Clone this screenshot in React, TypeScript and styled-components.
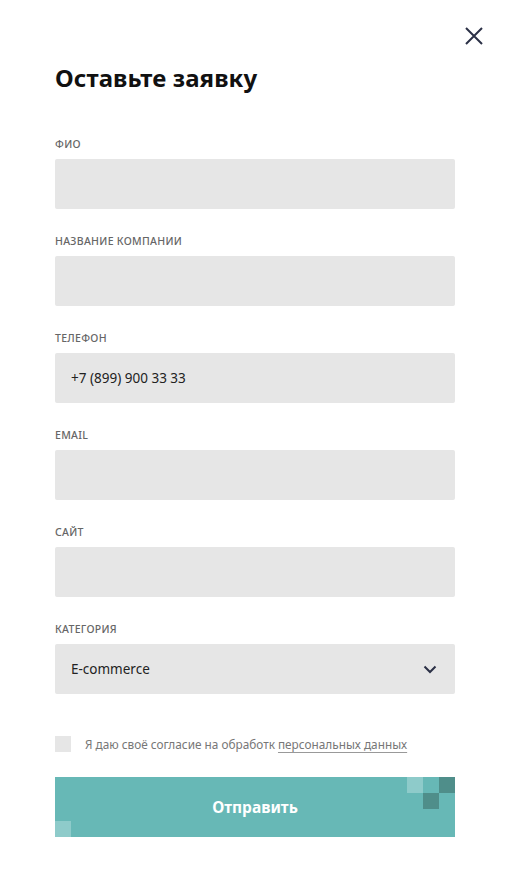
import React from "react";
import styled, { createGlobalStyle } from "styled-components";

const Global = createGlobalStyle`
  html, body { margin: 0; padding: 0; background: #fff; }
  body { font-family: "Noto Sans", "Liberation Sans", sans-serif; }
`;

const Modal = styled.div`
  position: relative;
  width: 510px;
  min-height: 893px;
  box-sizing: border-box;
  padding: 58px 55px 0 55px;
  background: #fff;
`;

const Close = styled.button`
  position: absolute;
  top: 26px;
  right: 26px;
  width: 20px;
  height: 20px;
  padding: 0;
  border: 0;
  background: none;
  display: flex;
  align-items: center;
  justify-content: center;
`;

const Title = styled.h1`
  margin: 0 0 38px 0;
  font-size: 24px;
  line-height: 40px;
  font-weight: 700;
  color: #111;
  letter-spacing: 0.1px;
`;

const Form = styled.form`
  display: flex;
  flex-direction: column;
  gap: 24px;
`;

const Field = styled.div`
  display: flex;
  flex-direction: column;
  gap: 7px;
`;

const Label = styled.label`
  font-size: 10.5px;
  line-height: 16px;
  font-weight: 500;
  color: #666;
  text-transform: uppercase;
  letter-spacing: 0.3px;
`;

const InputBox = styled.div`
  height: 50px;
  background: #e6e6e6;
  border-radius: 2px;
  display: flex;
  align-items: center;
  padding: 0 18px 0 16px;
  box-sizing: border-box;
  justify-content: space-between;
  font-size: 13.5px;
  color: #222;
`;

const Consent = styled.div`
  display: flex;
  align-items: center;
  gap: 14px;
  margin-top: 42px;
  height: 16px;
  font-size: 11.8px;
  color: #777;
`;

const Box = styled.span`
  width: 16px;
  height: 16px;
  background: #e6e6e6;
  flex: none;
`;

const Link = styled.span`
  text-decoration: underline;
  text-decoration-color: #999;
  text-underline-offset: 3px;
`;

const Submit = styled.button`
  position: relative;
  display: block;
  width: 100%;
  margin-top: 25px;
  height: 60px;
  border: 0;
  background: #67b8b6;
  color: #fff;
  font-family: inherit;
  font-size: 15.5px;
  font-weight: 700;
  overflow: hidden;
`;

const Pixel = styled.span<{ $x: number; $y: number; $c: string }>`
  position: absolute;
  width: 16px;
  height: 16px;
  left: ${(p) => p.$x}px;
  top: ${(p) => p.$y}px;
  background: ${(p) => p.$c};
`;

const LIGHT = "#8ecbca";
const DARK = "#4f8e8a";

const fields = [
  { label: "ФИО" },
  { label: "Название компании" },
  { label: "Телефон", value: "+7 (899) 900 33 33" },
  { label: "Email" },
  { label: "Сайт" },
];

export default function App() {
  return (
    <>
      <Global />
      <Modal>
        <Close aria-label="Закрыть">
          <svg width="18" height="18" viewBox="0 0 18 18">
            <path d="M1 1L17 17M17 1L1 17" stroke="#2b3046" strokeWidth="2" />
          </svg>
        </Close>
        <Title>Оставьте заявку</Title>
        <Form>
          {fields.map((f) => (
            <Field key={f.label}>
              <Label>{f.label}</Label>
              <InputBox>{f.value ?? ""}</InputBox>
            </Field>
          ))}
          <Field>
            <Label>Категория</Label>
            <InputBox>
              <span>E-commerce</span>
              <svg width="14" height="10" viewBox="0 0 14 10">
                <path d="M1.5 2.5L7 8L12.5 2.5" stroke="#2b3046" strokeWidth="2" fill="none" />
              </svg>
            </InputBox>
          </Field>
        </Form>
        <Consent>
          <Box />
          <span>
            Я даю своё согласие на обработк <Link>персональных данных</Link>
          </span>
        </Consent>
        <Submit>
          <Pixel $x={352} $y={0} $c={LIGHT} />
          <Pixel $x={384} $y={0} $c={DARK} />
          <Pixel $x={368} $y={16} $c={DARK} />
          <Pixel $x={0} $y={44} $c={LIGHT} />
          Отправить
        </Submit>
      </Modal>
    </>
  );
}
